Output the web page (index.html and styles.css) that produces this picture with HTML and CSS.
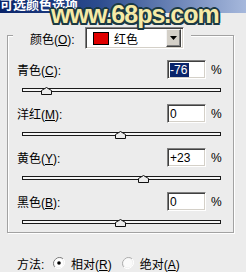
FILE: index.html
```html
<!DOCTYPE html>
<html lang="zh">
<head>
  <meta charset="UTF-8" />
  <title>可选颜色选项</title>
  <link rel="stylesheet" href="styles.css">
</head>
<body>
  <div class="titlebar"><span class="title">可选颜色选项</span></div>
  <div class="watermark">www.68ps.com</div>

  <div class="group">
    <div class="group-head">
      <span class="label head-label">颜色(<u>O</u>):</span>
      <div class="select">
        <span class="swatch"></span>
        <span class="select-text">红色</span>
        <span class="select-btn">
          <svg width="7" height="4" viewBox="0 0 7 4"><polygon points="0,0 7,0 3.5,4" fill="#000"/></svg>
        </span>
      </div>
    </div>

    <div class="channel">
      <div class="row">
        <span class="label">青色(<u>C</u>):</span>
        <span class="field"><span class="selected">-76</span></span>
        <span class="pct">%</span>
      </div>
      <div class="track"><span class="thumb" style="left:18px"><svg width="11" height="8" viewBox="0 0 11 8"><polygon points="0.5,7.5 0.5,3.5 5.5,0.5 10.5,3.5 10.5,7.5" fill="#ececec" stroke="#111"/></svg></span></div>
    </div>

    <div class="channel">
      <div class="row">
        <span class="label">洋红(<u>M</u>):</span>
        <span class="field">0</span>
        <span class="pct">%</span>
      </div>
      <div class="track"><span class="thumb" style="left:92px"><svg width="11" height="8" viewBox="0 0 11 8"><polygon points="0.5,7.5 0.5,3.5 5.5,0.5 10.5,3.5 10.5,7.5" fill="#ececec" stroke="#111"/></svg></span></div>
    </div>

    <div class="channel">
      <div class="row">
        <span class="label">黄色(<u>Y</u>):</span>
        <span class="field">+23</span>
        <span class="pct">%</span>
      </div>
      <div class="track"><span class="thumb" style="left:115px"><svg width="11" height="8" viewBox="0 0 11 8"><polygon points="0.5,7.5 0.5,3.5 5.5,0.5 10.5,3.5 10.5,7.5" fill="#ececec" stroke="#111"/></svg></span></div>
    </div>

    <div class="channel">
      <div class="row">
        <span class="label">黑色(<u>B</u>):</span>
        <span class="field">0</span>
        <span class="pct">%</span>
      </div>
      <div class="track"><span class="thumb" style="left:92px"><svg width="11" height="8" viewBox="0 0 11 8"><polygon points="0.5,7.5 0.5,3.5 5.5,0.5 10.5,3.5 10.5,7.5" fill="#ececec" stroke="#111"/></svg></span></div>
    </div>
  </div>

  <div class="method">
    <span class="label">方法:</span>
    <span class="radio">
      <svg width="12" height="12" viewBox="0 0 12 12">
        <path d="M10.2,1.8 A6,6 0 0 0 1.8,10.2" fill="none" stroke="#808080" stroke-width="1"/>
        <path d="M1.8,10.2 A6,6 0 0 0 10.2,1.8" fill="none" stroke="#fff" stroke-width="1"/>
        <circle cx="6" cy="6" r="4.5" fill="#fff"/>
        <circle cx="6" cy="6" r="1.8" fill="#000"/>
      </svg>
      <span>相对(<u>R</u>)</span>
    </span>
    <span class="radio">
      <svg width="12" height="12" viewBox="0 0 12 12">
        <path d="M10.2,1.8 A6,6 0 0 0 1.8,10.2" fill="none" stroke="#b0b0b0" stroke-width="1"/>
        <path d="M1.8,10.2 A6,6 0 0 0 10.2,1.8" fill="none" stroke="#fff" stroke-width="1"/>
        <circle cx="6" cy="6" r="4.5" fill="#fafafa"/>
      </svg>
      <span>绝对(<u>A</u>)</span>
    </span>
  </div>
</body>
</html>
```

FILE: styles.css
```css
* {
  margin: 0;
  padding: 0;
  box-sizing: border-box;
}

body {
  width: 246px;
  height: 272px;
  overflow: hidden;
  background: #ececec;
  font-family: "Liberation Sans", "Noto Sans CJK SC", sans-serif;
  font-size: 12px;
  color: #000;
  position: relative;
}

u {
  text-decoration: underline;
  text-underline-offset: 1px;
}

/* Title bar (cut off at the top) */
.titlebar {
  height: 13px;
  overflow: hidden;
  background: linear-gradient(90deg, #0a246a, #2c4c8e 40%, #a6b8dc);
}

.title {
  display: block;
  margin-top: -5px;
  padding-left: 0;
  color: #fff;
  font-weight: bold;
  font-size: 13px;
  line-height: 18px;
  font-family: "Noto Sans CJK SC", sans-serif;
}

.watermark {
  position: absolute;
  left: 51px;
  top: 0;
  font-family: "Liberation Sans", sans-serif;
  font-weight: bold;
  font-size: 25px;
  letter-spacing: -1px;
  line-height: 28px;
  color: #f6eaa6;
  text-shadow:
    2px 0 0 #1b3944, -2px 0 0 #1b3944, 0 2px 0 #1b3944, 0 -2px 0 #1b3944,
    1.5px 1.5px 0 #1b3944, -1.5px 1.5px 0 #1b3944, 1.5px -1.5px 0 #1b3944, -1.5px -1.5px 0 #1b3944;
}

/* Group box */
.group {
  margin: 22px 0 0 7px;
  width: 227px;
  border: 1px solid #a2a2a2;
  box-shadow: inset 1px 1px 0 #fff, 1px 1px 0 #fff;
  padding-bottom: 8px;
}

.group-head {
  display: flex;
  align-items: center;
  margin: -9px 0 0 5px;
  width: 178px;
  height: 22px;
  padding-left: 17px;
  background: #ececec;
}

.head-label {
  width: 55px;
}

.select {
  display: flex;
  align-items: center;
  width: 99px;
  height: 22px;
  background: #fff;
  border-top: 1px solid #808080;
  border-left: 1px solid #808080;
  border-right: 1px solid #fff;
  border-bottom: 1px solid #fff;
  box-shadow: inset 1px 1px 0 #404040, inset -1px -1px 0 #d4d0c8;
  padding: 2px 2px 2px 7px;
}

.swatch {
  width: 16px;
  height: 13px;
  background: #e00000;
  border: 1px solid #000;
}

.select-text {
  margin-left: 5px;
  flex: 1;
}

.select-btn {
  display: flex;
  align-items: center;
  justify-content: center;
  width: 15px;
  height: 18px;
  background: #d4d0c8;
  border-top: 1px solid #f4f4f4;
  border-left: 1px solid #f4f4f4;
  border-right: 1px solid #404040;
  border-bottom: 1px solid #404040;
  box-shadow: inset -1px -1px 0 #808080;
}

/* Channel rows */
.channel {
  margin-top: 11px;
}

.channel + .channel {
  margin-top: 12px;
}

.row {
  display: flex;
  align-items: center;
  height: 19px;
  padding-left: 9px;
}

.row .label {
  width: 150px;
}

.field {
  width: 39px;
  height: 19px;
  background: #fff;
  border-top: 1px solid #808080;
  border-left: 1px solid #808080;
  border-right: 1px solid #fff;
  border-bottom: 1px solid #fff;
  box-shadow: inset 1px 1px 0 #404040, inset -1px -1px 0 #d4d0c8;
  padding: 2px 0 0 2px;
  line-height: 14px;
  font-size: 12px;
}

.selected {
  display: inline-block;
  background: #0a246a;
  color: #fff;
  padding-right: 2px;
}

.pct {
  margin-left: 5px;
}

.track {
  position: relative;
  margin: 9px 0 0 14px;
  width: 199px;
  height: 4px;
  border: 1px solid #1a1a1a;
  background: #f6f6f6;
}

.thumb {
  position: absolute;
  top: -2px;
  display: block;
  line-height: 0;
}

/* Method radios */
.method {
  display: flex;
  align-items: center;
  margin-top: 22px;
  padding-left: 17px;
  height: 16px;
}

.method .label {
  width: 36px;
}

.radio {
  display: flex;
  align-items: center;
  gap: 6px;
  margin-right: 10px;
}
```
